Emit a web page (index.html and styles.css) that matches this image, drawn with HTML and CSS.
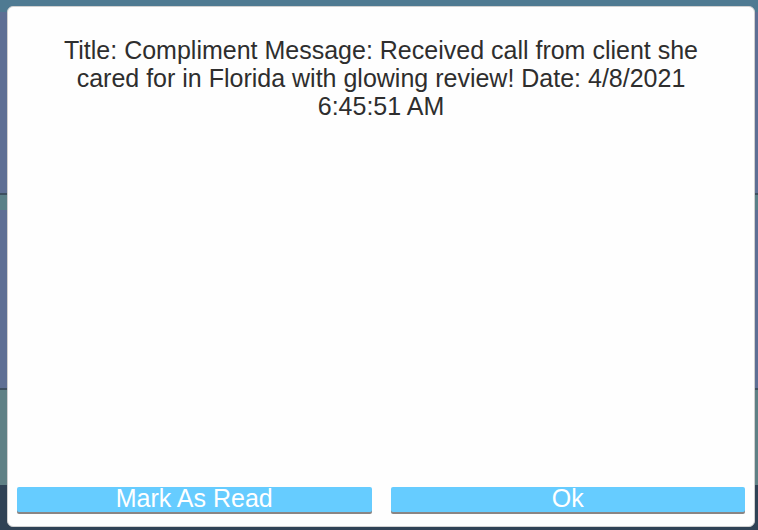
FILE: index.html
```html
<!DOCTYPE html>
<html lang="en">
<head>
  <meta charset="UTF-8">
  <title>Message</title>
  <link rel="stylesheet" href="styles.css">
</head>
<body>
  <div class="modal">
    <div class="modal__body">
      <p class="modal__text">Title: Compliment Message: Received call from client she cared for in Florida with glowing review! Date: 4/8/2021 6:45:51 AM</p>
    </div>
    <div class="modal__controls">
      <button class="modal__button">Mark As Read</button>
      <button class="modal__button">Ok</button>
    </div>
  </div>
</body>
</html>
```

FILE: styles.css
```css
html {
  box-sizing: border-box;
}

*, *:before, *:after {
  box-sizing: inherit;
}

body {
  margin: 0;
  height: 530px;
  overflow: hidden;
  padding: 6px 3px 3px 7px;
  font-family: 'Liberation Sans', Arial, sans-serif;
  background: linear-gradient(to bottom,
    #4f7a92 0, #4f7a92 12px,
    #5e6f94 12px, #5e6f94 193px,
    #3d5060 193px, #3d5060 195px,
    #5a8088 195px, #5a8088 210px,
    #5e6f94 210px, #5e6f94 388px,
    #3d5060 388px, #3d5060 390px,
    #5f8085 390px, #5f8085 485px,
    #2f4255 485px, #2f4255 100%);
}

.modal {
  width: 748px;
  height: 521px;
  background: #fefefe;
  border: 1px solid #d0d0d0;
  border-radius: 6px;
  display: flex;
  flex-direction: column;
  padding: 0 9px 14px 9px;
}

.modal__body {
  flex: 1;
  padding: 29px 40px 0;
}

.modal__text {
  margin: 0;
  text-align: center;
  font-size: 25px;
  line-height: 28px;
  color: #2e2e2e;
}

.modal__controls {
  display: flex;
  gap: 19px;
}

.modal__button {
  flex: 1;
  height: 25px;
  border: 0;
  border-radius: 2px;
  padding: 0 0 3px;
  background: #66ccff;
  box-shadow: 0 2px 0 #8a8584;
  color: white;
  font-family: 'Liberation Sans', Arial, sans-serif;
  font-size: 25px;
  line-height: 22px;
}
```
